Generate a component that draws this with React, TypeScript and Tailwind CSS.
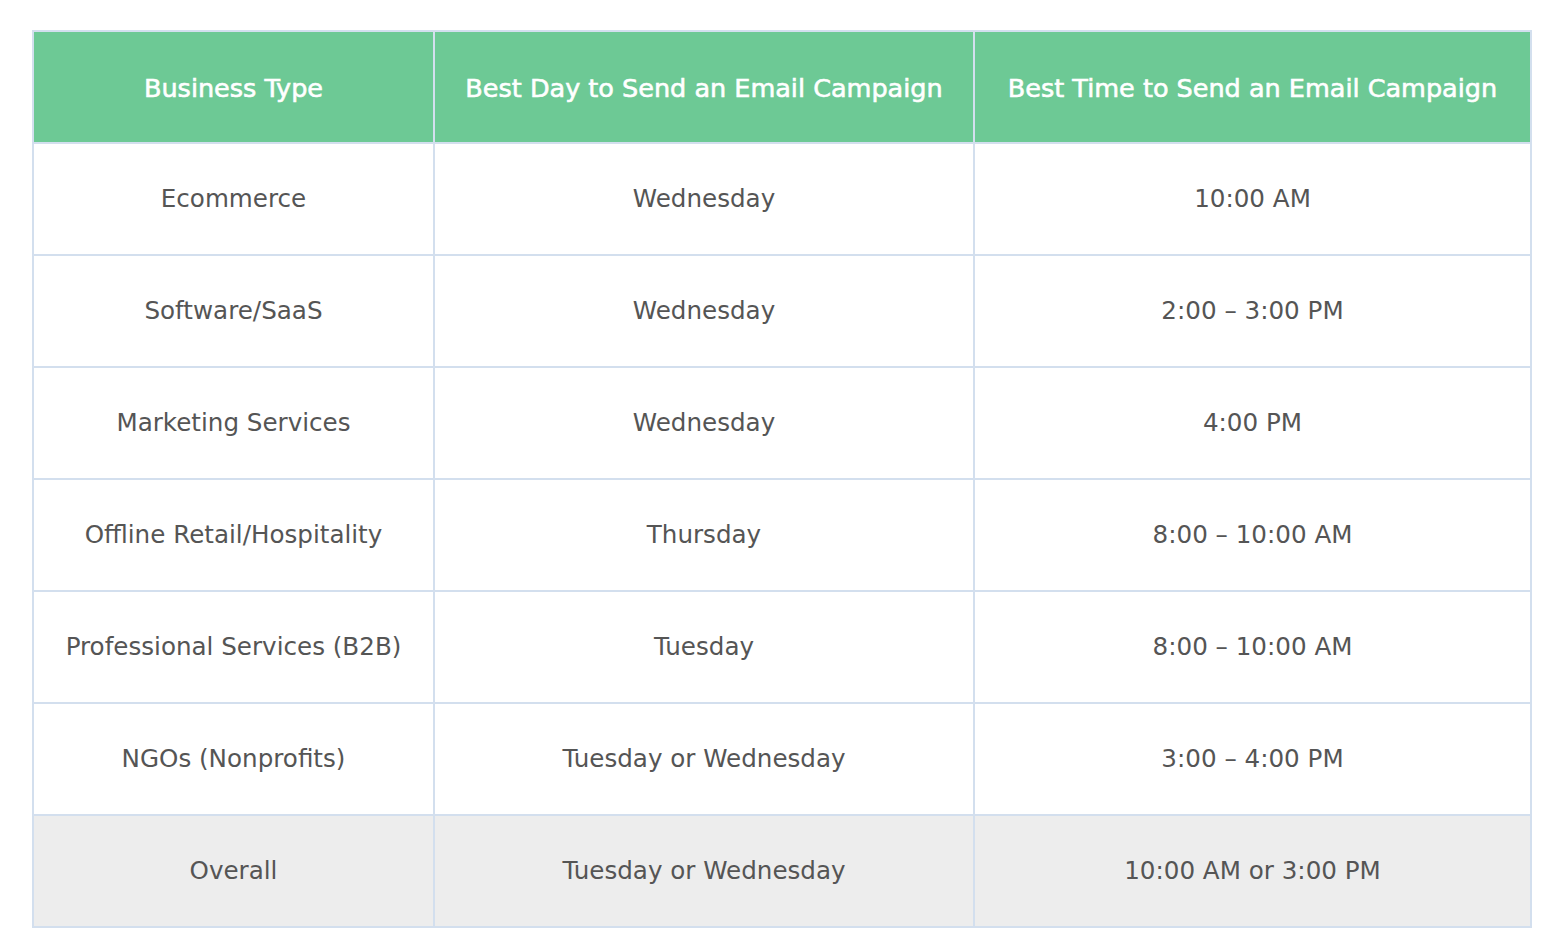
import React from "react";

const rows: [string, string, string][] = [
  ["Ecommerce", "Wednesday", "10:00 AM"],
  ["Software/SaaS", "Wednesday", "2:00 – 3:00 PM"],
  ["Marketing Services", "Wednesday", "4:00 PM"],
  ["Offline Retail/Hospitality", "Thursday", "8:00 – 10:00 AM"],
  ["Professional Services (B2B)", "Tuesday", "8:00 – 10:00 AM"],
  ["NGOs (Nonprofits)", "Tuesday or Wednesday", "3:00 – 4:00 PM"],
];

const cell = "border-2 border-[#d3dfee] text-center align-middle h-[112px] p-0";
const head = cell + " font-normal text-[25.5px] pt-[3px]";

export default function App() {
  return (
    <div className="min-h-screen bg-white pt-[30px] pl-[32px] font-['DejaVu_Sans',sans-serif]">
      <table className="border-collapse table-fixed w-[1500px] text-[24.6px] text-[#555555]">
        <colgroup>
          <col className="w-[401px]" />
          <col className="w-[540px]" />
          <col />
        </colgroup>
        <thead>
          <tr className="bg-[#6dc995] text-white [-webkit-text-stroke:0.6px_white]">
            <th className={head}>Business Type</th>
            <th className={head}>Best Day to Send an Email Campaign</th>
            <th className={head}>Best Time to Send an Email Campaign</th>
          </tr>
        </thead>
        <tbody>
          {rows.map((r) => (
            <tr key={r[0]}>
              <td className={cell}>{r[0]}</td>
              <td className={cell}>{r[1]}</td>
              <td className={cell}>{r[2]}</td>
            </tr>
          ))}
          <tr className="bg-[#ededed]">
            <td className={cell}>Overall</td>
            <td className={cell}>Tuesday or Wednesday</td>
            <td className={cell}>10:00 AM or 3:00 PM</td>
          </tr>
        </tbody>
      </table>
    </div>
  );
}
